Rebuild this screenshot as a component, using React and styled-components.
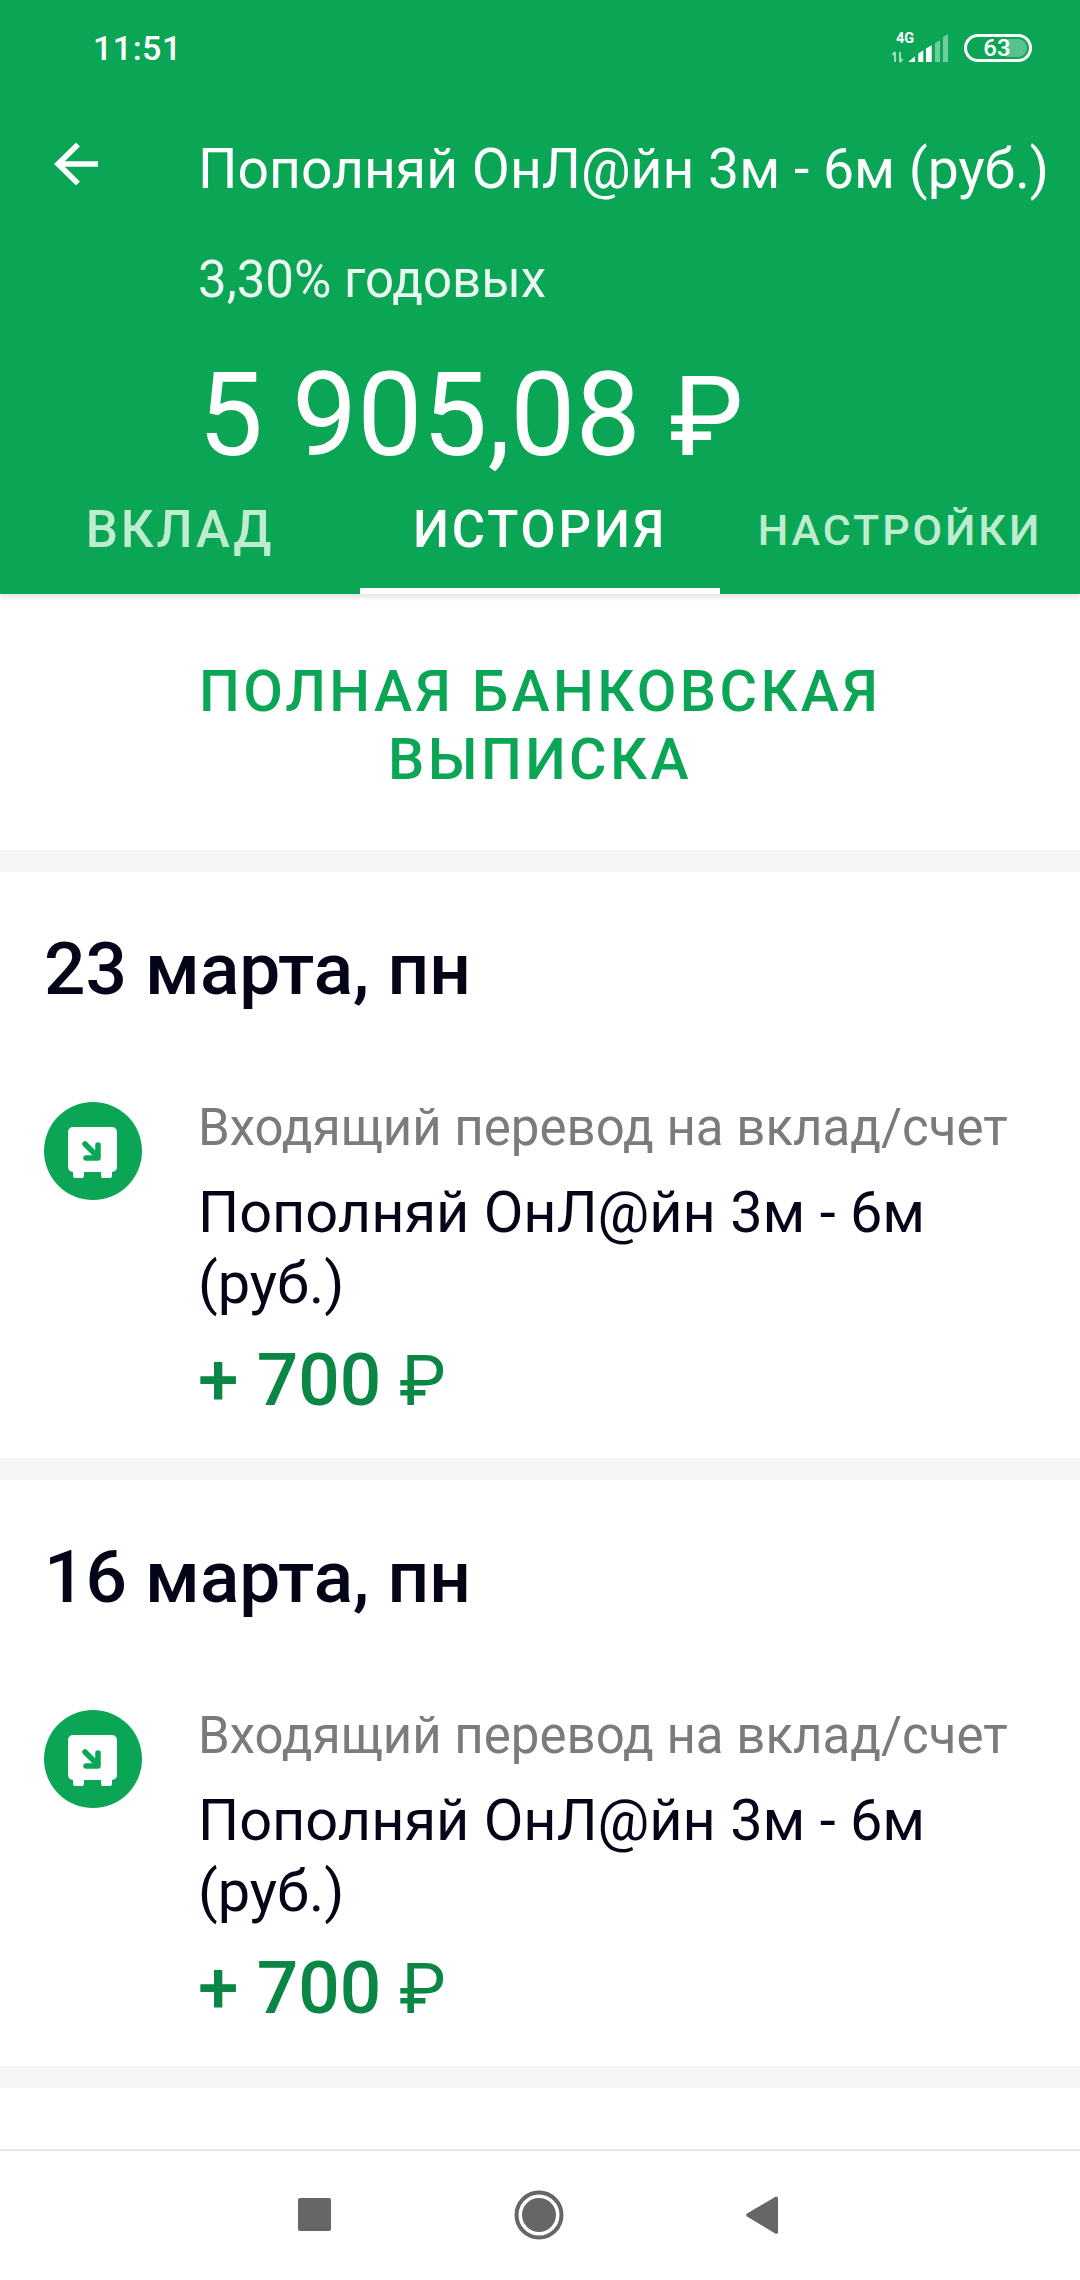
import React from 'react';
import styled, { createGlobalStyle } from 'styled-components';

const Global = createGlobalStyle`
  html, body { margin: 0; padding: 0; background: #fff; }
  * { box-sizing: border-box; }
  body { font-family: Roboto, "Noto Sans", sans-serif; }
`;
const Screen = styled.div`
  width: 1080px; height: 2280px; display: flex; flex-direction: column; overflow: hidden; background: #fff;
`;
const Header = styled.header`
  background: #0aa656; color: #fff; height: 594px; flex: none; display: flex; flex-direction: column;
  box-shadow: 0 3px 6px rgba(0,0,0,.12); position: relative; z-index: 1;
`;
const StatusBar = styled.div`
  height: 96px; padding: 0 48px 0 93px; display: flex; align-items: center; justify-content: space-between;
`;
const Time = styled.span`font-size: 34px; font-weight: 500; letter-spacing: .5px;`;
const StatusIcons = styled.div`display: flex; align-items: center; gap: 16px;`;
const NetWrap = styled.div`position: relative; width: 56px; height: 32px;`;
const NetLabel = styled.span`
  position: absolute; left: 4px; top: -1px; font-size: 14.5px; font-weight: 700; line-height: 16px;
`;
const Battery = styled.div`
  width: 68px; height: 28px; border: 3px solid #fff; border-radius: 14px; padding: 2px; position: relative;
  display: flex; align-items: center; justify-content: flex-end;
`;
const BatteryFill = styled.div`height: 100%; width: 22px; background: rgba(255,255,255,.32); border-radius: 3px 9px 9px 3px;`;
const BatteryText = styled.span`
  position: absolute; left: 0; right: 2px; top: 0; bottom: 0; display: flex; align-items: center; justify-content: center;
  font-size: 24px; font-weight: 500;
`;
const TitleRow = styled.div`
  display: flex; align-items: center; height: 70px; margin-top: 38px;
`;
const BackButton = styled.div`width: 198px; padding: 0 0 11px 54px; display: flex; align-items: center; flex: none;`;
const Title = styled.div`font-size: 55.3px; white-space: nowrap;`;
const Rate = styled.div`font-size: 51px; padding-left: 198px; line-height: 56px; margin-top: 48px; opacity: .92;`;
const Balance = styled.div`font-size: 116px; padding-left: 198px; line-height: 120px; margin-top: 47px; font-weight: 400;`;
const Tabs = styled.nav`display: grid; grid-template-columns: repeat(3, 360px); flex: 1; min-height: 0; margin-top: 15px;`;
const Tab = styled.div`
  display: flex; justify-content: center; align-items: flex-start; line-height: 76px;
  font-weight: 500; letter-spacing: 2.9px; font-size: ${p => p.$size}px;
  color: ${p => p.$active ? '#fff' : '#bdeccf'};
  border-bottom: 6px solid ${p => p.$active ? '#fff' : 'transparent'};
`;
const Content = styled.main`flex: 1; min-height: 0; display: flex; flex-direction: column;`;
const StatementButton = styled.div`
  height: 256px; flex: none; display: flex; align-items: center; justify-content: center; text-align: center;
  color: #0aa656; font-size: 57.5px; font-weight: 500; line-height: 68px; letter-spacing: 3.4px; padding: 8px 170px 0;
`;
const Band = styled.div`height: 22px; flex: none; background: #f5f5f5;`;
const Day = styled.section`height: 586px; flex: none; padding: 0 45px; display: flex; flex-direction: column;`;
const DayTitle = styled.h2`
  margin: 55px 0 0 -1px; font-size: 73px; line-height: 84px; font-weight: 500; color: #05051a;
`;
const Operation = styled.div`display: flex; margin-top: 91px;`;
const IconCol = styled.div`width: 154px; flex: none; margin-left: -1px;`;
const OpBody = styled.div`display: flex; flex-direction: column;`;
const OpLabel = styled.div`font-size: 51px; line-height: 52px; color: #7b7b7b;`;
const OpName = styled.div`font-size: 57.7px; line-height: 71px; color: #05051a; margin-top: 23px; width: 800px;`;
const OpAmount = styled.div`font-size: 73px; line-height: 84px; font-weight: 500; color: #0a8744; margin-top: 19px;`;
const Ruble = styled.span`font-weight: 400; font-size: .96em;`;
const NavBar = styled.div`
  height: 131px; flex: none; border-top: 2px solid #e8e8e8; display: flex; align-items: center;
  justify-content: space-between; padding: 0 302px 2px 298px;
`;

const Signal = () => (
  <svg width="56" height="32" viewBox="0 0 56 32" fill="none">
    <path d="M3 30V20M0.5 23L3 20M8 20v10M10.5 27L8 30" stroke="rgba(255,255,255,.6)" strokeWidth="2"/>
    <path d="M16.3 30l6.7-5.7V30zM26.3 30V21.5l5-3.2V30zM34 30V16.5l5.7-3.2V30z" fill="#fff"/>
    <path d="M43 30V11l5-2.7V30zM51 30V5l5-3V30z" fill="rgba(255,255,255,.42)"/>
  </svg>
);
const BackArrow = () => (
  <svg width="44" height="44" viewBox="0 0 44 44" fill="none" stroke="#fff" strokeWidth="5.5">
    <path d="M44 22H4M24 2.5L4 22l20 19.5"/>
  </svg>
);
const SafeIcon = () => (
  <svg width="98" height="98" viewBox="0 0 98 98">
    <circle cx="49" cy="49" r="49" fill="#0aa656"/>
    <path d="M29 25h39a5 5 0 0 1 5 5v35a5 5 0 0 1-5 5v4a2 2 0 0 1-2 2h-7a2 2 0 0 1-2-2v-4H40v4a2 2 0 0 1-2 2h-7a2 2 0 0 1-2-2v-4a5 5 0 0 1-5-5V30a5 5 0 0 1 5-5z" fill="#fff"/>
    <path d="M41 42l13 13M54 43v13H42" fill="none" stroke="#0aa656" strokeWidth="5.5" strokeLinecap="round" strokeLinejoin="round"/>
  </svg>
);
const NavSquare = () => (<svg width="33" height="33" viewBox="0 0 33 33"><rect width="33" height="33" rx="2" fill="#666"/></svg>);
const NavCircle = () => (<svg width="50" height="50" viewBox="0 0 50 50"><circle cx="25" cy="25" r="22.5" fill="none" stroke="#666" strokeWidth="4"/><circle cx="25" cy="25" r="17" fill="#666"/></svg>);
const NavBack = () => (<svg width="32" height="38" viewBox="0 0 32 38"><path d="M30 0.5a2 2 0 0 1 2 1.5v35l-2 1L1 20.5a2 2 0 0 1 0-3z" fill="#666"/></svg>);

const days = ['23 марта, пн', '16 марта, пн'];

export default function App() {
  return (
    <Screen>
      <Global />
      <Header>
        <StatusBar>
          <Time>11:51</Time>
          <StatusIcons>
            <NetWrap><NetLabel>4G</NetLabel><Signal /></NetWrap>
            <Battery><BatteryFill /><BatteryText>63</BatteryText></Battery>
          </StatusIcons>
        </StatusBar>
        <TitleRow>
          <BackButton><BackArrow /></BackButton>
          <Title>Пополняй ОнЛ@йн 3м - 6м (руб.)</Title>
        </TitleRow>
        <Rate>3,30% годовых</Rate>
        <Balance>5 905,08 <Ruble>₽</Ruble></Balance>
        <Tabs>
          <Tab $size={51}>ВКЛАД</Tab>
          <Tab $size={51} $active>ИСТОРИЯ</Tab>
          <Tab $size={43}>НАСТРОЙКИ</Tab>
        </Tabs>
      </Header>
      <Content>
        <StatementButton>ПОЛНАЯ БАНКОВСКАЯ ВЫПИСКА</StatementButton>
        <Band />
        {days.map(d => (
          <React.Fragment key={d}>
            <Day>
              <DayTitle>{d}</DayTitle>
              <Operation>
                <IconCol><SafeIcon /></IconCol>
                <OpBody>
                  <OpLabel>Входящий перевод на вклад/счет</OpLabel>
                  <OpName>Пополняй ОнЛ@йн 3м - 6м (руб.)</OpName>
                  <OpAmount>+ 700 <Ruble>₽</Ruble></OpAmount>
                </OpBody>
              </Operation>
            </Day>
            <Band />
          </React.Fragment>
        ))}
      </Content>
      <NavBar>
        <NavSquare />
        <NavCircle />
        <NavBack />
      </NavBar>
    </Screen>
  );
}
